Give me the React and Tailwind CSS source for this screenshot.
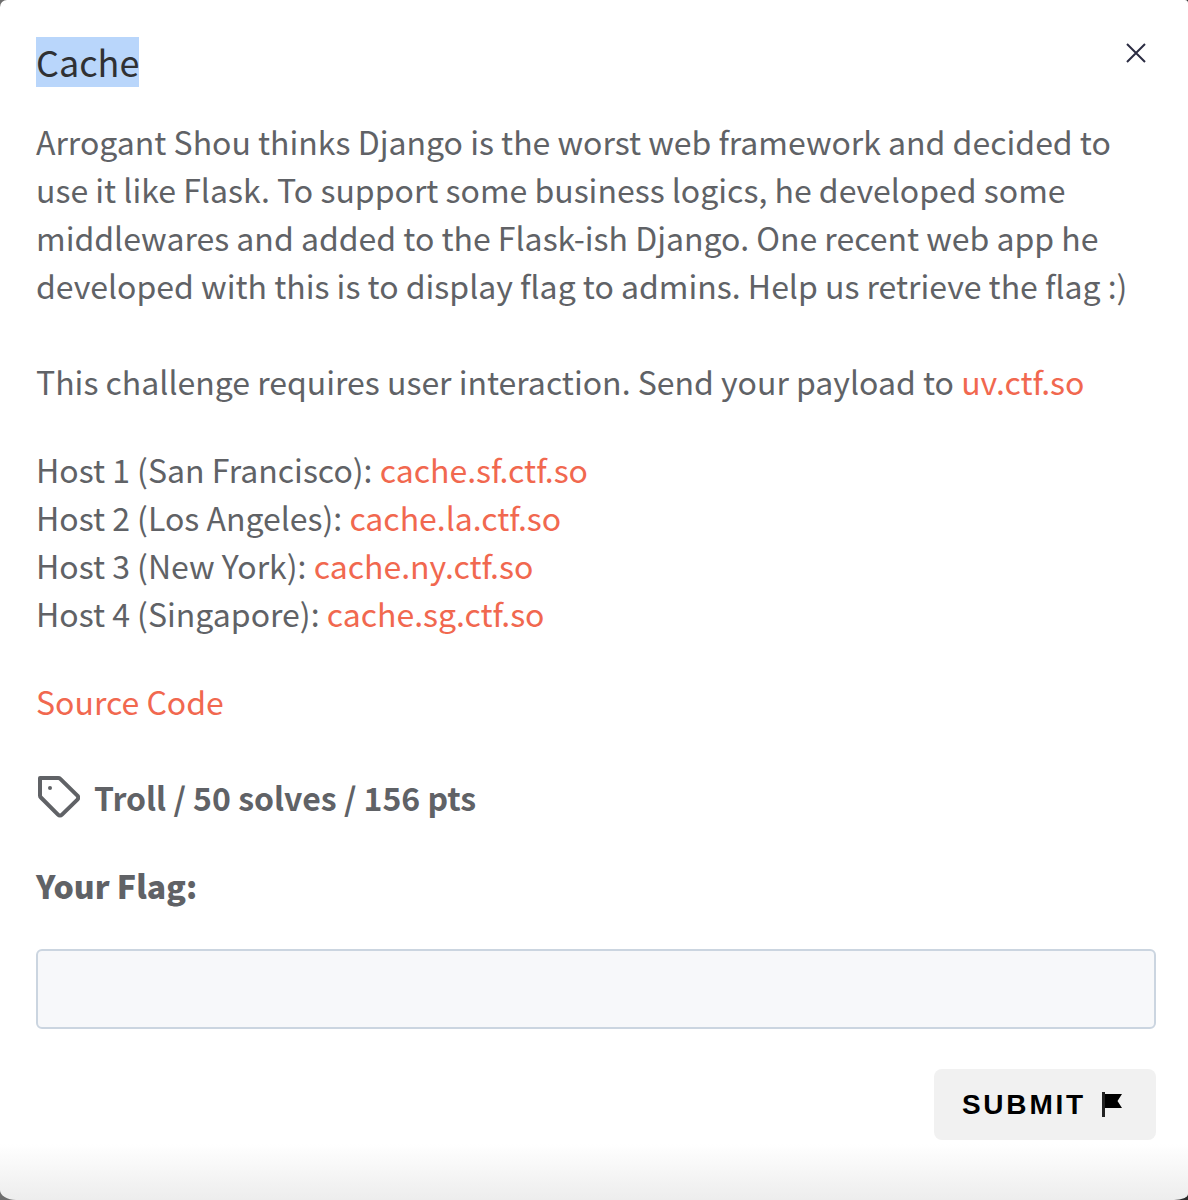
import React from 'react';

const hosts = [
  { label: 'Host 1 (San Francisco):', domain: 'cache.sf.ctf.so' },
  { label: 'Host 2 (Los Angeles):', domain: 'cache.la.ctf.so' },
  { label: 'Host 3 (New York):', domain: 'cache.ny.ctf.so' },
  { label: 'Host 4 (Singapore):', domain: 'cache.sg.ctf.so' },
];

function Link({ href, children }) {
  return (
    <a href={href} className="text-[#f1684f] hover:underline">
      {children}
    </a>
  );
}

function CloseIcon() {
  return (
    <svg viewBox="0 0 20 20" className="size-5" fill="none" stroke="#2b2c42" strokeWidth="2" aria-hidden="true">
      <path d="M1 1 19 19M19 1 1 19" />
    </svg>
  );
}

function TagIcon() {
  return (
    <svg viewBox="0 0 44 44" className="size-11 shrink-0" fill="none" stroke="currentColor" strokeWidth="4" strokeLinejoin="round" aria-hidden="true">
      <path d="M4 3H22.2Q23.4 3 24.3 3.9L41.4 20.6Q43.2 22.6 41.4 24.6L26 39.6Q24 41.6 22 39.6L4.9 22.5Q4 21.6 4 20.4Z" />
      <circle cx="14" cy="13" r="2" fill="currentColor" stroke="none" />
    </svg>
  );
}

function FlagIcon() {
  return (
    <svg viewBox="0 0 20 26" className="h-[26px] w-5" aria-hidden="true">
      <path d="M0 0H3V25H0Z" fill="#222" />
      <path d="M3 2H20L15.5 9 20 16H3Z" fill="#000" />
    </svg>
  );
}

export default function App() {
  return (
    <div className="min-h-screen bg-linear-to-r from-[#6e6e6e] to-[#2a2a2a] font-['Noto_Sans_CJK_SC',sans-serif] text-[32px] leading-[48px] text-[#606266]">
      <main className="flex min-h-screen flex-col bg-white bg-linear-to-t from-[#ededed] to-white to-[56px] px-8 pt-9 pb-[60px] pl-9 [border-radius:7px_3px_14px_16px/7px_3px_6px_10px]">
        <header className="flex items-start justify-between">
          <h1 className="mt-px bg-[#b9d6fb] pb-0.5 text-[36px] leading-[48px] text-[#303133]">Cache</h1>
          <button type="button" aria-label="Close" className="px-2.5 py-[7px]">
            <CloseIcon />
          </button>
        </header>
        <p className="mt-[30px]">
          Arrogant Shou thinks Django is the worst web framework and decided to use it like Flask. To support some
          business logics, he developed some middlewares and added to the Flask-ish Django. One recent web app he
          developed with this is to display flag to admins. Help us retrieve the flag :)
        </p>
        <p className="mt-12">
          This challenge requires user interaction. Send your payload to <Link href="#uv">uv.ctf.so</Link>
        </p>
        <ul className="mt-10">
          {hosts.map((host) => (
            <li key={host.domain}>
              {host.label} <Link href={`#${host.domain}`}>{host.domain}</Link>
            </li>
          ))}
        </ul>
        <p className="mt-10">
          <Link href="#source">Source Code</Link>
        </p>
        <div className="mt-12 flex items-center gap-[14px] font-bold">
          <TagIcon />
          <p>Troll / 50 solves / 156 pts</p>
        </div>
        <form className="mt-10 flex flex-col" onSubmit={(e) => e.preventDefault()}>
          <label htmlFor="flag" className="font-black">
            Your Flag:
          </label>
          <input
            id="flag"
            type="text"
            className="mt-10 h-20 w-full rounded-md border-2 border-[#cbd5e0] bg-[#f7f8fa] px-5 outline-none"
          />
          <button
            type="submit"
            className="mt-10 flex h-[71px] items-center gap-4 self-end rounded-lg bg-[#f1f1f1] pr-[34px] pl-7 font-['Liberation_Sans',sans-serif] text-[28px] font-bold tracking-widest text-black"
          >
            SUBMIT
            <FlagIcon />
          </button>
        </form>
      </main>
    </div>
  );
}
